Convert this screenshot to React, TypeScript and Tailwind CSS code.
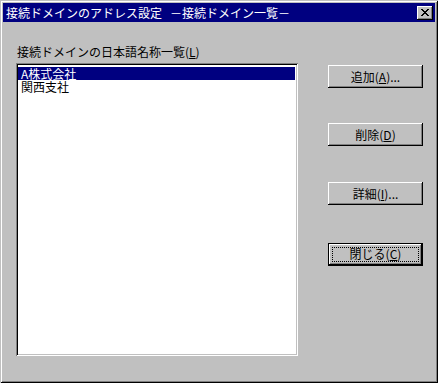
import React from "react";

function CloseGlyph() {
  // 8x7 pixel cross, Win95 style
  const px: [number, number][] = [
    [0, 0], [1, 0], [6, 0], [7, 0],
    [1, 1], [2, 1], [5, 1], [6, 1],
    [2, 2], [3, 2], [4, 2], [5, 2],
    [3, 3], [4, 3],
    [2, 4], [3, 4], [4, 4], [5, 4],
    [1, 5], [2, 5], [5, 5], [6, 5],
    [0, 6], [1, 6], [6, 6], [7, 6],
  ];
  return (
    <svg width="8" height="7" viewBox="0 0 8 7" shapeRendering="crispEdges">
      {px.map(([x, y]) => (
        <rect key={`${x}-${y}`} x={x} y={y} width="1" height="1" fill="#000" />
      ))}
    </svg>
  );
}

function Btn({ children, def = false }: { children: React.ReactNode; def?: boolean }) {
  if (def) {
    return (
      <button className="w-[95px] h-[23px] border border-black bg-[#c0c0c0] p-0 shadow-[inset_-1px_-1px_#000,inset_1px_1px_#fff,inset_-2px_-2px_#808080]">
        <div className="m-[3px] h-[15px] border border-dotted border-black flex items-center justify-center text-[12px] leading-[12px] text-black">
          {children}
        </div>
      </button>
    );
  }
  return (
    <button className="w-[95px] h-[23px] bg-[#c0c0c0] flex items-center justify-center text-[12px] leading-[12px] text-black shadow-[inset_-1px_-1px_#000,inset_1px_1px_#fff,inset_-2px_-2px_#808080]">
      {children}
    </button>
  );
}

export default function App() {
  return (
    <div className="w-[438px] h-[383px] bg-[#c0c0c0] p-[3px] flex flex-col font-['Noto_Sans_CJK_JP',sans-serif] shadow-[inset_1px_1px_#c0c0c0,inset_-1px_-1px_#000,inset_2px_2px_#fff,inset_-2px_-2px_#808080]">
      {/* Title bar */}
      <div className="h-[19px] bg-[#000080] flex items-center justify-between pl-[3px] pr-[2px]">
        <div className="flex text-white text-[12px] leading-[12px]">
          <span>接続ドメインのアドレス設定</span>
          <span className="ml-[8px]">－接続ドメイン一覧－</span>
        </div>
        <div className="w-[16px] h-[14px] bg-[#c0c0c0] flex items-center justify-center pb-px pr-px shadow-[inset_-1px_-1px_#000,inset_1px_1px_#fff,inset_-2px_-2px_#808080]">
          <CloseGlyph />
        </div>
      </div>

      <div className="flex pl-[13px]">
        {/* Left: list */}
        <div className="w-[282px] flex flex-col pt-[24px]">
          <div className="pl-px text-[12px] leading-[12px] text-black">
            接続ドメインの日本語名称一覧(<span className="underline">L</span>)
          </div>
          <div className="mt-[5px] h-[293px] bg-white p-[2px] shadow-[inset_1px_1px_#808080,inset_-1px_-1px_#fff,inset_2px_2px_#000,inset_-2px_-2px_#c0c0c0]">
            <div className="pt-[2px] pr-px flex flex-col text-[12px] leading-[13px]">
              <div className="h-[13px] bg-[#000080] text-white pl-[3px]">A株式会社</div>
              <div className="h-[13px] text-black pl-[3px]">関西支社</div>
            </div>
          </div>
        </div>

        {/* Right: buttons */}
        <div className="flex flex-col pl-[30px] pt-[43px]">
          <Btn>追加(<span className="underline">A</span>)...</Btn>
          <div className="mt-[35px]">
            <Btn>削除(<span className="underline">D</span>)</Btn>
          </div>
          <div className="mt-[36px]">
            <Btn>詳細(<span className="underline">I</span>)...</Btn>
          </div>
          <div className="mt-[35px]">
            <Btn def>閉じる(<span className="underline">C</span>)</Btn>
          </div>
        </div>
      </div>
    </div>
  );
}
